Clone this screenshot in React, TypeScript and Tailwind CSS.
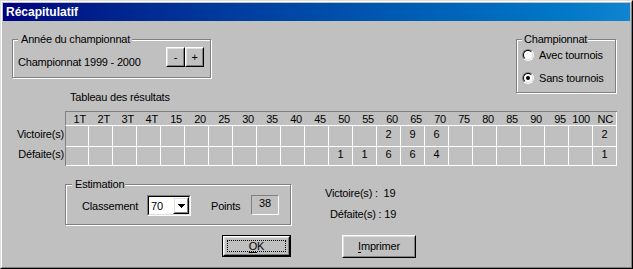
import React from "react";

const cols = ["1T","2T","3T","4T","15","20","25","30","35","40","45","50","55","60","65","70","75","80","85","90","95","100","NC"];
const vict: Record<number, string> = { 13: "2", 14: "9", 15: "6", 22: "2" };
const defs: Record<number, string> = { 11: "1", 12: "1", 13: "6", 14: "6", 15: "4", 22: "1" };

function Raised({ className = "", children }: { className?: string; children?: React.ReactNode }) {
  return (
    <div className={`border border-t-white border-l-white border-r-black border-b-black ${className}`}>
      <div className="w-full h-full border border-t-[#dfdfdf] border-l-[#dfdfdf] border-r-[#808080] border-b-[#808080] flex items-center justify-center">
        {children}
      </div>
    </div>
  );
}

function GroupBox({
  legend,
  className = "",
  legendClass = "",
  children,
}: {
  legend: string;
  className?: string;
  legendClass?: string;
  children?: React.ReactNode;
}) {
  return (
    <div className={`relative shrink-0 border border-[#808080] shadow-[inset_1px_1px_0_#fff,1px_1px_0_#fff] ${className}`}>
      <span className={`absolute top-[-7px] bg-[#c0c0c0] leading-[13px] whitespace-nowrap ${legendClass}`}>{legend}</span>
      {children}
    </div>
  );
}

function Radio({ checked }: { checked?: boolean }) {
  return (
    <div className="w-[12px] h-[12px] shrink-0 rounded-full border border-t-[#808080] border-l-[#808080] border-r-white border-b-white">
      <div className="w-full h-full rounded-full border border-t-black border-l-black border-r-[#dfdfdf] border-b-[#dfdfdf] bg-white flex items-center justify-center">
        {checked && <div className="w-[4px] h-[4px] rounded-full bg-black" />}
      </div>
    </div>
  );
}

function DownArrow() {
  return (
    <svg width="7" height="4" viewBox="0 0 7 4" shapeRendering="crispEdges">
      <rect x="0" y="0" width="7" height="1" fill="#000" />
      <rect x="1" y="1" width="5" height="1" fill="#000" />
      <rect x="2" y="2" width="3" height="1" fill="#000" />
      <rect x="3" y="3" width="1" height="1" fill="#000" />
    </svg>
  );
}

export default function App() {
  return (
    <div className="w-[633px] h-[269px] font-['Liberation_Sans',Arial,sans-serif] text-[11px] tracking-[-0.2px] leading-[13px] text-black border border-t-[#dfdfdf] border-l-[#dfdfdf] border-r-black border-b-black">
      <div className="h-full border border-t-white border-l-white border-r-[#808080] border-b-[#808080] bg-[#c0c0c0] p-px flex flex-col">
        {/* Title bar */}
        <div className="h-[18px] shrink-0 bg-linear-to-r from-[#000080] to-[#1084d0] flex items-center pl-[3px] text-white font-bold text-[12px] tracking-normal leading-[18px]">
          Récapitulatif
        </div>

        {/* Body */}
        <div className="flex-1 flex flex-col">
          {/* Top row */}
          <div className="flex justify-between items-start">
            <div className="flex flex-col">
              <GroupBox legend="Année du championnat" className="ml-[9px] mt-[18px] w-[199px] h-[39px]" legendClass="left-[5px] pl-[3px] pr-[2px]">
                <div className="flex justify-between items-start pl-[5px] pr-[6px] pt-[7px]">
                  <span className="mt-[9px] whitespace-nowrap">Championnat 1999 - 2000</span>
                  <div className="flex">
                    <Raised className="w-[19px] h-[20px]">-</Raised>
                    <Raised className="w-[19px] h-[20px]">+</Raised>
                  </div>
                </div>
              </GroupBox>
              <div className="ml-[67px] mt-[13px] whitespace-nowrap">Tableau des résultats</div>
            </div>
            <GroupBox legend="Championnat" className="mr-[14px] mt-[18px] w-[100px] h-[54px]" legendClass="left-[5px] pl-[2px] pr-[1px]">
              <div className="flex flex-col pl-[5px] pt-[9px] gap-[11px]">
                <div className="flex items-center h-[12px]">
                  <Radio />
                  <span className="ml-[5px] whitespace-nowrap">Avec tournois</span>
                </div>
                <div className="flex items-center h-[12px]">
                  <Radio checked />
                  <span className="ml-[5px] whitespace-nowrap">Sans tournois</span>
                </div>
              </div>
            </GroupBox>
          </div>

          {/* Grid */}
          <div className="mt-[7px] flex flex-col">
            <div className="flex">
              <div className="w-[62px]" />
              <div className="flex h-[15px] border-t border-b border-l border-t-[#808080] border-l-[#808080] border-b-white">
                {cols.map((c, i) => (
                  <div
                    key={c}
                    className={`${i === 0 ? "w-[23px]" : "w-[24px]"} ${i === cols.length - 1 ? "border-r border-r-white" : ""} text-right pr-[3px] pt-[1px] leading-[13px]`}
                  >
                    {c}
                  </div>
                ))}
              </div>
            </div>
            <div className="flex h-[21px]">
              <div className="w-[62px] text-right pt-[2px] pr-[1px]">Victoire(s)</div>
              <div className="flex border-l border-l-[#808080]">
                {cols.map((c, i) => (
                  <div
                    key={c}
                    className={`${i === 0 ? "w-[23px]" : "w-[24px]"} h-full border-r border-b border-white text-center pt-[2px]`}
                  >
                    {vict[i] ?? ""}
                  </div>
                ))}
              </div>
            </div>
            <div className="flex h-[19px]">
              <div className="w-[62px] text-right pt-[1px] pr-[1px]">Défaite(s)</div>
              <div className="flex border-l border-l-[#808080]">
                {cols.map((c, i) => (
                  <div
                    key={c}
                    className={`${i === 0 ? "w-[23px]" : "w-[24px]"} h-full border-r border-b border-white text-center pt-[1px]`}
                  >
                    {defs[i] ?? ""}
                  </div>
                ))}
              </div>
            </div>
          </div>

          {/* Estimation + totals */}
          <div className="flex items-start mt-[18px]">
            <GroupBox legend="Estimation" className="ml-[62px] w-[226px] h-[41px]" legendClass="left-[6px] pl-[3px] pr-[1px]">
              <div className="flex items-start pt-[10px] pl-[16px]">
                <span className="w-[65px] mt-[5px]">Classement</span>
                <div className="w-[44px] h-[21px] border border-t-[#808080] border-l-[#808080] border-r-white border-b-white">
                  <div className="w-full h-full flex border border-t-black border-l-black border-r-[#dfdfdf] border-b-[#dfdfdf] bg-white">
                    <span className="flex-1 pl-[2px] pt-[3px]">70</span>
                    <Raised className="w-[16px] h-full">
                      <DownArrow />
                    </Raised>
                  </div>
                </div>
                <span className="ml-[20px] w-[40px] mt-[5px]">Points</span>
                <div className="w-[28px] h-[20px] border border-t-[#808080] border-l-[#808080] border-r-white border-b-white text-center pt-[1px]">
                  38
                </div>
              </div>
            </GroupBox>
            <div className="ml-[34px] mt-[3px] flex flex-col whitespace-pre">
              <span>Victoire(s) :  19</span>
              <span className="mt-[8px] ml-[5px]">Défaite(s) : 19</span>
            </div>
          </div>

          {/* Buttons */}
          <div className="flex mt-[10px]">
            <div className="ml-[219px] w-[69px] h-[22px] border border-black">
              <Raised className="w-full h-full">
                <div className="relative w-full h-full flex items-center justify-center">
                  <div className="absolute inset-[2px] border border-dotted border-black" />
                  <span>
                    <span className="underline underline-offset-[2px]">O</span>K
                  </span>
                </div>
              </Raised>
            </div>
            <Raised className="ml-[51px] w-[74px] h-[23px]">
              <span>
                <span className="underline underline-offset-[2px]">I</span>mprimer
              </span>
            </Raised>
          </div>
        </div>
      </div>
    </div>
  );
}
